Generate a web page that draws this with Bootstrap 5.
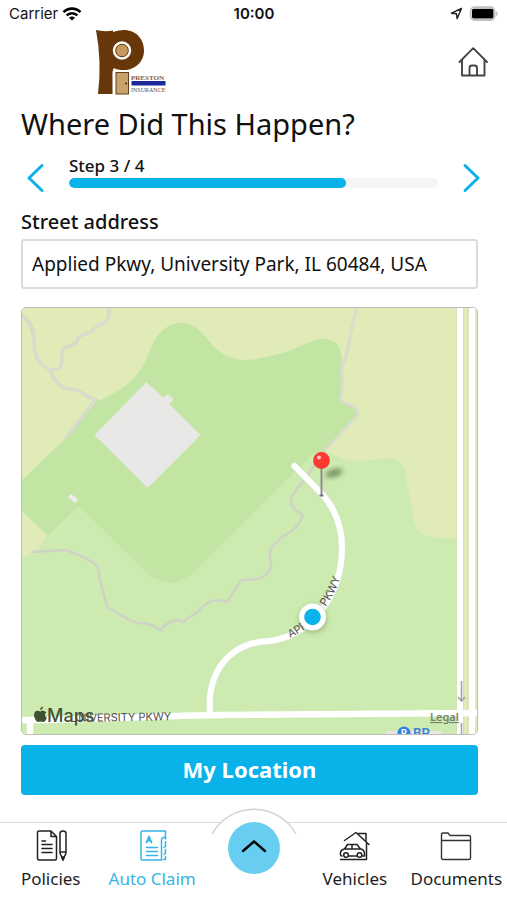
<!DOCTYPE html>
<html lang="en">
<head>
<meta charset="utf-8">
<meta name="viewport" content="width=device-width, initial-scale=1">
<title>Where Did This Happen?</title>
<link href="https://cdn.jsdelivr.net/npm/bootstrap@5.3.0/dist/css/bootstrap.min.css" rel="stylesheet">
<style>
  :root { --brand: #09b2e8; --side: 21px; --side-end: 29px; }
  body { font-family: "Noto Sans", "Open Sans", sans-serif; color: #111; background: #fff; }
  svg { display: block; }
  .status-bar { font: 15px/27px Inter, sans-serif; padding: 0 8px 0 9px; }
  .status-bar .side { flex: 1 1 0; }
  .gutter { padding-left: var(--side); padding-right: var(--side-end); }
  .brand-bar { height: 76px; padding: 2px 18px 0 95px; }
  .page-title { font-size: 29px; line-height: 40px; margin: 1px 0 11px; font-weight: 400; }
  .stepper { gap: 24px; padding: 0 26px; height: 40px; }
  .step-btn { color: var(--brand); padding: 6px 0 0; border: 0; background: none; }
  .step-name { font-size: 17px; line-height: 20px; font-weight: 500; margin-top: -6px; padding-bottom: 2px; }
  .step-track { height: 10px; border-radius: 5px; background: #f4f5f6; }
  .step-track .progress-bar { background: var(--brand); border-radius: 5px; }
  .addr-label { font-size: 20px; line-height: 26px; font-weight: 500; margin: 14px 0 4px; }
  .addr-input { height: 50px; font-size: 19px; padding: 0 9px; color: #111; border: 2px solid #dadada; border-radius: 3px; }
  .map-box { margin-top: 18px; border: 1px solid #bdbdb8; border-radius: 5px; overflow: hidden; }
  .map-box svg { width: 100%; height: auto; }
  .locate { height: 50px; margin-top: 10px; font-size: 22px; line-height: 30px; font-weight: 700; color: #fff; background: var(--brand); border: 0; border-radius: 4px; padding: 0 0 2px; }
  .tab-bar { border-top: 1px solid #d9d9d9; height: 78px; }
  .tab-bar .tab { flex: 1 1 0; min-width: 0; color: #1d1d1f; text-decoration: none; font-size: 17px; line-height: 24px; white-space: nowrap; padding-top: 6px; gap: 4px; }
  .tab-bar .tab.current { color: #33b5e5; }
  .menu-slot { flex: 1 1 0; min-width: 0; }
  .menu-arc { position: absolute; left: 50%; top: -15px; transform: translateX(-50%); }
  .menu-btn { position: relative; width: 52px; height: 52px; border-radius: 50%; background: #67cef1; border: 0; padding: 0; margin-top: -1px; }
</style>
<script src="https://cdn.jsdelivr.net/npm/bootstrap@5.3.0/dist/js/bootstrap.bundle.min.js"></script>
</head>
<body>
<div class="d-flex flex-column min-vh-100">

  <div class="status-bar d-flex align-items-center">
    <div class="side d-flex align-items-center gap-1">
      <span>Carrier</span>
      <svg width="20" height="14" viewBox="0 0 20 14" fill="none" stroke="#000" stroke-width="2.6" aria-hidden="true">
        <path d="M1.500 5.200a12 12 0 0 1 17 0M4.700 8.400a7.500 7.500 0 0 1 10.600 0"/><path d="M10 13.600 7 10.700a4.200 4.200 0 0 1 6 0z" fill="#000" stroke="none"/>
      </svg>
    </div>
    <div class="fw-semibold">10:00</div>
    <div class="side d-flex align-items-center justify-content-end gap-1">
      <svg width="13" height="13" viewBox="0 0 13 13" fill="none" stroke="#222" stroke-width="1.4" stroke-linejoin="round" aria-hidden="true"><path d="M11.500 1.500 1.500 6.200l5 .6.6 4.800z"/></svg>
      <svg width="32" height="16" viewBox="0 0 32 16" aria-hidden="true"><rect x="3.600" y="1.200" width="24" height="12.800" rx="4" fill="#fff" stroke="#c0c0c0" stroke-width="1.800"/><rect x="5" y="2.800" width="21.400" height="9.600" rx="1.600"/><path d="M29.400 5.200q2.600 2.400 0 5z" fill="#aaa"/></svg>
    </div>
  </div>

  <header class="brand-bar d-flex justify-content-between align-items-start">
    <svg width="72" height="68" viewBox="0 0 72 68" role="img" aria-label="Preston Insurance">
      <path d="M1 1Q9 3 18 1.500V3Q24 1 29 1C41 1 49 10 49 21.500S40 41 29 41Q22 41 19 39Q17 41 17.500 49V65H3Q7 33 1 1Z" fill="#673609"/>
      <circle cx="27" cy="21.500" r="9.200" fill="#fff"/><circle cx="27" cy="21.500" r="6.300" fill="#c6995f" stroke="#673609"/>
      <rect x="18" y="41" width="17" height="26" fill="#fff"/>
      <rect x="21" y="43.500" width="12.500" height="21.500" fill="#c8a16b" stroke="#60401e"/>
      <circle cx="31" cy="54.500" r="1" fill="#402400"/>
      <text x="36" y="51" font-family="Liberation Serif, serif" font-size="7" font-weight="700" fill="#8a5c3c">PRESTON</text>
      <rect x="36.500" y="52" width="34" height="4.500" fill="#1b2899"/>
      <text x="36" y="63" font-family="Liberation Serif, serif" font-size="6" fill="#6b4a35">INSURANCE</text>
    </svg>
    <a href="#" aria-label="Home" class="mt-3">
      <svg width="32" height="34" viewBox="0 0 32 34" fill="none" stroke="#44444a" stroke-width="1.900" stroke-linejoin="round" stroke-linecap="round"><path d="M2.500 17 16.200 3.200 30 17M5 15V30.500h22.500V15M12.500 30.500V23q0-2.500 2.500-2.500h2.500q2.500 0 2.500 2.500v7.500"/></svg>
    </a>
  </header>

  <main>
    <h1 class="page-title gutter">Where Did This Happen?</h1>

    <div class="stepper d-flex align-items-center">
      <button type="button" class="step-btn" aria-label="Previous step">
        <svg width="19" height="30" viewBox="0 0 19 30" fill="none" stroke="currentColor" stroke-width="3" stroke-linecap="round" stroke-linejoin="round"><path d="M16 2.500 3 15l13 12.500"/></svg>
      </button>
      <div class="flex-grow-1">
        <div class="step-name" id="step-name">Step 3 / 4</div>
        <div class="progress step-track" role="progressbar" aria-labelledby="step-name" aria-valuenow="75" aria-valuemin="0" aria-valuemax="100">
          <div class="progress-bar" style="width:75%"></div>
        </div>
      </div>
      <button type="button" class="step-btn" aria-label="Next step">
        <svg width="19" height="30" viewBox="0 0 19 30" fill="none" stroke="currentColor" stroke-width="3" stroke-linecap="round" stroke-linejoin="round"><path d="m3 2.500 13 12.500L3 27.500"/></svg>
      </button>
    </div>

    <div class="gutter">
      <label class="addr-label d-block" for="street">Street address</label>
      <input class="form-control addr-input" id="street" type="text" value="Applied Pkwy, University Park, IL 60484, USA">

      <div class="map-box">
        <svg viewBox="22 308 455 426" role="img" aria-label="Map of Applied Pkwy">
          <defs>
            <filter id="soft" x="-50%" y="-50%" width="200%" height="200%"><feGaussianBlur stdDeviation="2.500"/></filter>
            <path id="pkwy" d="M290 638Q314 627 328 603Q339 587 344 564"/>
          </defs>
          <rect x="22" y="308" width="455" height="426" fill="#cdeab0"/>
          <!-- woodland and fields -->
          <path d="M22 308H458V538H438Q418 538 414 520L405 472Q402 458 389 458L362 461Q342 462 325 450L22 482Z" fill="#e0ebb7"/>
          <path d="M22 480 66 438 97 401Q106 399 112 394 132 384 143 366C150 352 152 340 164 329Q177 319 191 325C204 330 208 344 222 353 236 363 254 360 270 356 292 352 304 343 318 339 334 337 341 345 342 357L340 400Q359 408 356 416L325 450 312 455 293 474 193 573Q170 592 147 573L79 506 47 536 22 511Z" fill="#c3e5a3"/>
          <path d="M22 511 47 535 38 551 22 558Z" fill="#e0ebb7"/>
          <rect x="463" y="308" width="14" height="426" fill="#e0ebb7"/>
          <!-- buildings -->
          <path d="m146.500 382 17 16 4-4 6 5-4 5 31 31-53 53-53-53Z" fill="#e8e8e6"/>
          <path d="m68 497 3-3 7 5-3 4Z" fill="#ececea"/>
          <!-- trails -->
          <g fill="none" stroke-linejoin="round" stroke-linecap="round">
            <g id="trails">
              <path d="M22 316Q33 322 34 340C34 360 41 366 50 370Q57 388 70 389C82 389 86 398 96 400L66 437M109 308V314C108 326 97 322 92 331 87 336 80 332 77 341 72 350 62 343 62 354 63 370 58 370 50 370" stroke="#cfd2c6" stroke-width="3"/>
              <path d="M357 308 352 326 348 350 341 370Q344 388 340 399C342 406 364 406 356 417L325 450 303 482Q287 498 292 505C296 516 306 510 301 520 292 536 283 533 278 541 266 549 271 559 271 567 266 580 256 580 242 580 239 582 235 589 227 602 215 597 207 603 201 608 198 615 190 614 184 622 173 618 166 623 161 630 157 629 153 624 143 623 136 625 129 619 108 608 105 600 101 585 98 568 96 562 82 556 66 550 53 551 40 551 32 552 27 556 22 558M47 536 39 551" stroke="#cfd2c6" stroke-width="2.500"/>
              <path d="M22 316Q33 322 34 340C34 360 41 366 50 370Q57 388 70 389C82 389 86 398 96 400L66 437M109 308V314C108 326 97 322 92 331 87 336 80 332 77 341 72 350 62 343 62 354 63 370 58 370 50 370M357 308 352 326 348 350 341 370Q344 388 340 399C342 406 364 406 356 417L325 450" stroke="#dedfd9" stroke-width="1.400"/>
            </g>
          </g>
          <!-- roads -->
          <g fill="none" stroke="#fff" stroke-linecap="round">
            <path d="M294.500 466 321 493C335 508 342 526 342 548 342 593 313 635 270 641 228 642 207 674 210 712" stroke="#dbe3d0" stroke-width="7"/>
            <path d="M457 308V734M463.500 308V734M468 308V734" stroke="#d5d8ca" stroke-width="1"/>
            <path d="M294.500 466 321 493C335 508 342 526 342 548 342 593 313 635 270 641 228 642 207 674 210 712" stroke-width="6"/>
            <path d="M460 308V734M472 308V734" stroke-width="6" stroke-linecap="butt"/>
            <path d="M22 720C90 720 150 716 220 715L477 713M30 720V734" stroke-width="6.500" stroke-linecap="butt"/>
          </g>
          <path d="M461.500 681V700M458 697l3.500 4 3.500-4M461.500 723V734" fill="none" stroke="#a3a3a3" stroke-width="1.600"/>
          <!-- road names -->
          <g font-family="Inter, sans-serif" fill="#505050">
            <text font-size="11"><textPath href="#pkwy" startOffset="0">APPLIED</textPath></text>
            <text font-size="11"><textPath href="#pkwy" startOffset="48">PKWY</textPath></text>
            <text x="70" y="722" font-size="11" transform="rotate(-1 70 722)">UNIVERSITY PKWY</text>
            <text x="47" y="722" font-size="18" font-weight="500" fill="#43533a">Maps</text>
          </g>
          <path d="M40.500 711.500Q42.500 710 44 711 45.500 711 46.300 712.500 43.300 714.500 46.800 718 45 722.500 43 722 40.500 721 38 722 35.500 721.500 34 716 34 710.500 38 710.800ZM40 710Q40 707.500 43 706.500 43 709.500 40 710Z" fill="#3f5035"/>
          <text x="430" y="721" font-family="Noto Sans, sans-serif" font-size="11" font-weight="600" fill="#77806c" text-decoration="underline">Legal</text>
          <!-- parking place -->
          <rect x="385" y="731" width="58" height="8" rx="4" fill="#e7e8e0"/>
          <circle cx="404" cy="733" r="6.500" fill="#2f80e7"/>
          <text x="401" y="736" font-family="Inter, sans-serif" font-size="9" font-weight="700" fill="#fff">P</text>
          <text x="413" y="738" font-family="Inter, sans-serif" font-size="13" font-weight="600" fill="#3b82d8">BP</text>
          <!-- current position -->
          <circle cx="313" cy="619" r="14" fill="#496a35" fill-opacity=".35" filter="url(#soft)"/>
          <circle cx="312.500" cy="617" r="13.500" fill="#fff"/><circle cx="312.500" cy="617" r="8.300" fill="#09b2e8"/>
          <!-- dropped pin -->
          <ellipse cx="334" cy="473" rx="9" ry="4" fill="#4c693a" fill-opacity=".65" filter="url(#soft)" transform="rotate(-18 334 473)"/>
          <path d="M319.500 495.500h4" stroke="#707078" stroke-width="2"/>
          <path d="M321.500 466V495" stroke="#8d8d92" stroke-width="2"/>
          <circle cx="321.500" cy="460.500" r="8.400" fill="#fc3a30"/><circle cx="319" cy="457.500" r="2" fill="#ffc9c4"/>
        </svg>
      </div>

      <button type="button" class="btn locate w-100 d-block">My Location</button>
    </div>
  </main>

  <nav class="tab-bar d-flex mt-auto position-relative" aria-label="Main">
    <a href="#" class="tab d-flex flex-column align-items-center">
      <svg width="32" height="34" viewBox="0 0 32 34" fill="none" stroke="#222" stroke-width="1.500" stroke-linejoin="round" stroke-linecap="round"><path d="M4 2H16L21.500 7.500V29.500Q21.500 31 20 31H4Q2.500 31 2.500 29.500V3.500Q2.500 2 4 2ZM16 2V7.500H21.500M7 12h3.500M7 15.500h10M7 19.500h10M7 23.500h10"/><path d="M25 4.500Q25 2 28 2T31 4.500V24L28 31 25 24ZM25 23h6"/><path d="m26.800 28 1.200 3 1.200-3z" fill="#222"/></svg>
      <span>Policies</span>
    </a>
    <a href="#" class="tab current d-flex flex-column align-items-center" aria-current="page">
      <svg width="32" height="34" viewBox="0 0 32 34" fill="none" stroke="currentColor" stroke-width="1.500" stroke-linejoin="round" stroke-linecap="round"><path d="M6.500 2H29.500V7.500Q29 9 27 8.500 25.500 9 25.500 11V31H6.500Q5 31 5 29.500V3.500Q5 2 6.500 2ZM10.500 18.500h11M10.500 22.500h11M10.500 26.500h11"/><path d="m10.500 13.500 2.500-6 2.500 6M11.500 11.500h3" stroke-width="1.800"/><path d="M29.500 7.500V10M29.500 12.500v5l-1.500 1M29.500 20.500v4l-1.500 1M29.500 27.500V30.500H27.500" stroke-width="1.500"/></svg>
      <span>Auto Claim</span>
    </a>
    <div class="menu-slot d-flex justify-content-center align-items-start">
      <svg class="menu-arc" width="90" height="28" viewBox="0 0 90 28"><path d="M3 26A48 48 0 0 1 87 26V28H3Z" fill="#fff"/><path d="M3 26A48 48 0 0 1 87 26" fill="none" stroke="#d2d2d2" stroke-width="1.300"/></svg>
      <button type="button" class="menu-btn d-flex align-items-center justify-content-center" aria-label="Open menu">
        <svg width="28" height="16" viewBox="0 0 28 16" fill="none" stroke="#000" stroke-width="2.400" stroke-linecap="round" stroke-linejoin="round"><path d="M3 11 14 1.500 25 11"/></svg>
      </button>
    </div>
    <a href="#" class="tab d-flex flex-column align-items-center">
      <svg width="32" height="34" viewBox="0 0 32 34" fill="none" stroke="#222" stroke-width="1.500" stroke-linejoin="round" stroke-linecap="round"><path d="M5.500 11.500 17 3.500 30 15.500M19.500 5.500V4.500H27V12.500M27.500 14V30.500H1.500M3 27Q1 27 1.500 23.500 2 20.500 5.500 20L8.500 15.500H18L21.500 20Q25.500 20.500 25.500 25V27H23M18 27H10.500M5.500 20h16M13 15.500V20M9.500 27H18"/><circle cx="7" cy="26" r="2.300" fill="#fff"/><circle cx="20.500" cy="26" r="2.300" fill="#fff"/></svg>
      <span>Vehicles</span>
    </a>
    <a href="#" class="tab d-flex flex-column align-items-center">
      <svg width="32" height="34" viewBox="0 0 32 34" fill="none" stroke="#333" stroke-width="1.400" stroke-linejoin="round"><path d="M1.500 6Q1.500 4 3 4H8L10 6.500H29Q30.500 6.500 30.500 8V29Q30.500 30.500 29 30.500H3Q1.500 30.500 1.500 29ZM1.500 11.500H30.500"/></svg>
      <span>Documents</span>
    </a>
  </nav>
</div>
</body>
</html>
